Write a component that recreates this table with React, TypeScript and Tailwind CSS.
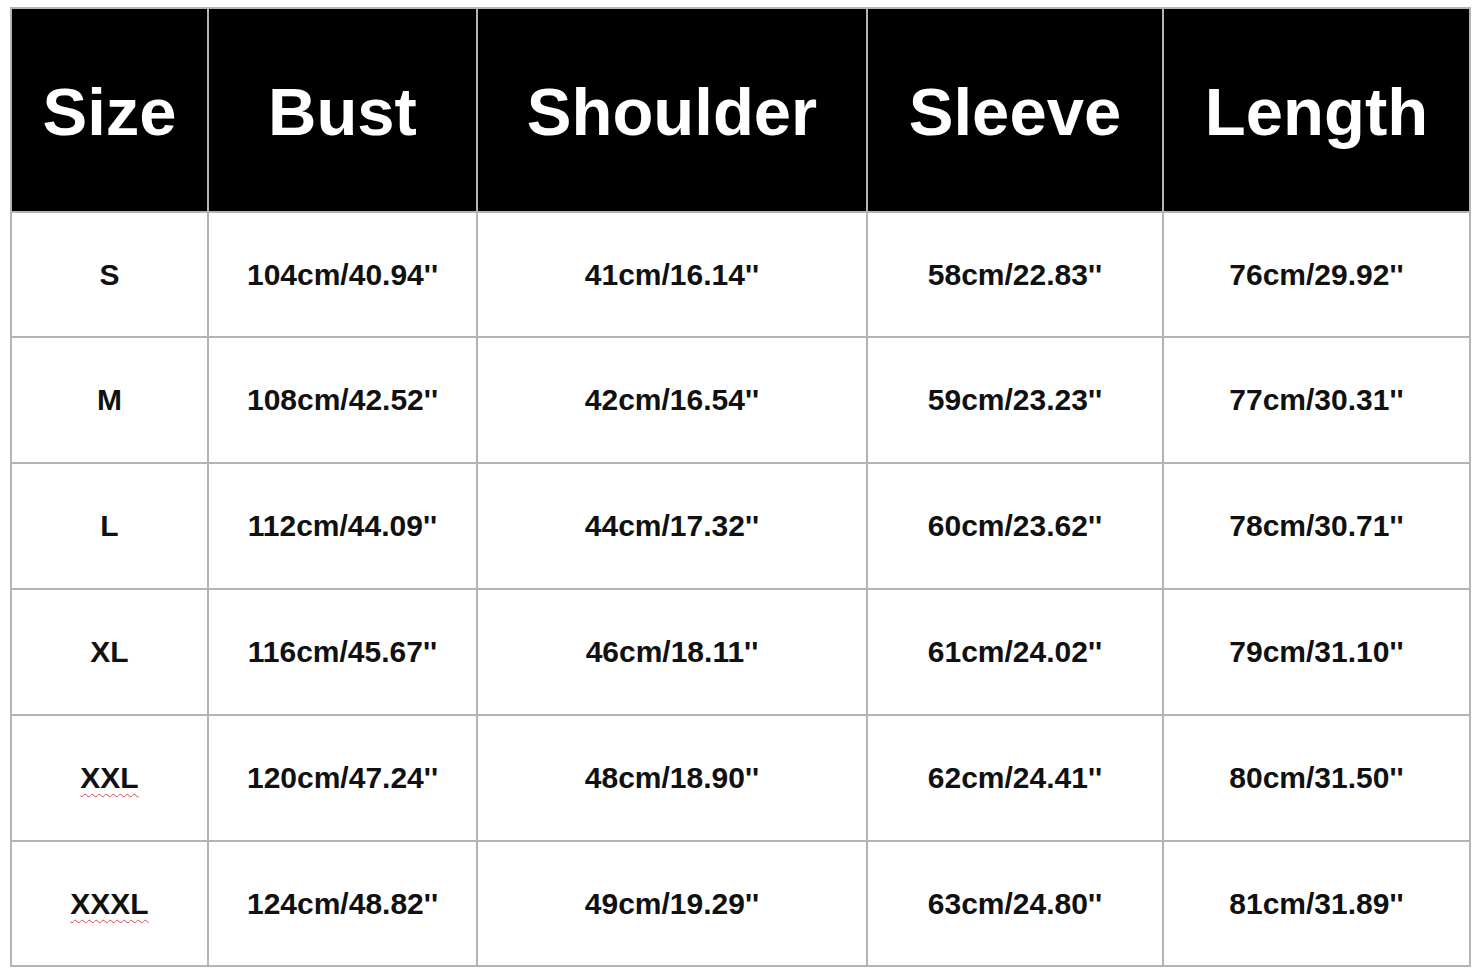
import React from "react";

const headers = ["Size", "Bust", "Shoulder", "Sleeve", "Length"];
const rows: string[][] = [
  ["S", "104cm/40.94''", "41cm/16.14''", "58cm/22.83''", "76cm/29.92''"],
  ["M", "108cm/42.52''", "42cm/16.54''", "59cm/23.23''", "77cm/30.31''"],
  ["L", "112cm/44.09''", "44cm/17.32''", "60cm/23.62''", "78cm/30.71''"],
  ["XL", "116cm/45.67''", "46cm/18.11''", "61cm/24.02''", "79cm/31.10''"],
  ["XXL", "120cm/47.24''", "48cm/18.90''", "62cm/24.41''", "80cm/31.50''"],
  ["XXXL", "124cm/48.82''", "49cm/19.29''", "63cm/24.80''", "81cm/31.89''"],
];

export default function App() {
  return (
    <div className="min-h-[969px] w-[1479px] bg-white pt-[7px] pl-[10px]" style={{ fontFamily: '"Liberation Sans", Arial, sans-serif' }}>
      <div className="grid w-max grid-cols-[197px_269px_390px_296px_307px] grid-rows-[204px_125px_126px_126px_126px_126px_125px] border-l-2 border-t-2 border-[#b4b4b4]">
        {headers.map((h) => (
          <div key={h} className="flex items-center justify-center border-r-2 border-b-2 border-[#b4b4b4] bg-black pt-[2px] text-[67px] font-bold leading-none text-white">
            {h}
          </div>
        ))}
        {rows.map((r) =>
          r.map((c, i) => (
            <div key={r[0] + i} className="flex items-center justify-center border-r-2 border-b-2 border-[#b4b4b4] bg-white text-[30px] font-bold leading-none text-[#111]">
              {i === 0 && (c === "XXL" || c === "XXXL") ? (
                <span className="underline decoration-wavy decoration-[#d04a4a] decoration-1 underline-offset-[5px]">{c}</span>
              ) : (
                c
              )}
            </div>
          ))
        )}
      </div>
    </div>
  );
}
